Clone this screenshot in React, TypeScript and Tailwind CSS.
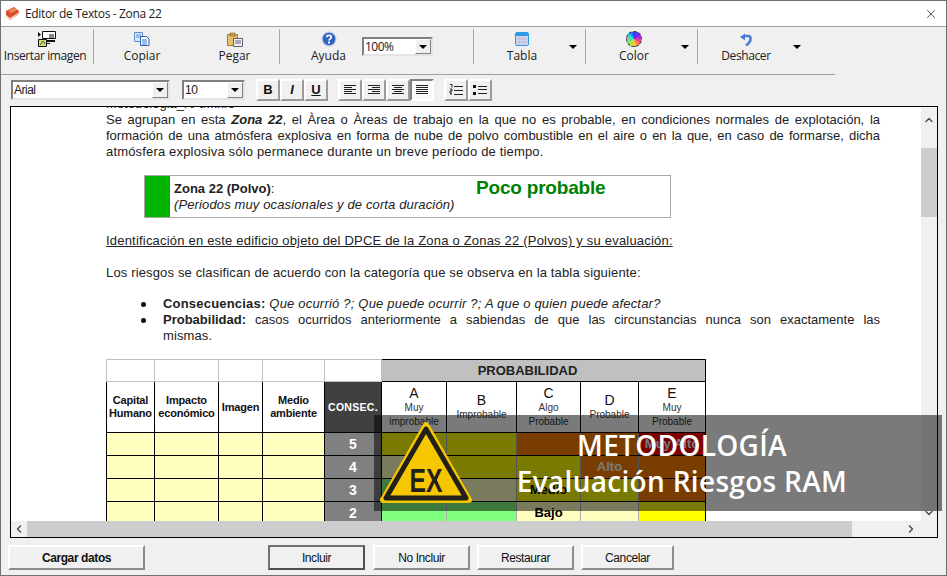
import React from 'react';
import { X, ChevronLeft, ChevronRight, ChevronUp, ChevronDown } from 'lucide-react';

const ui = 'font-["Open_Sans",sans-serif]';

const Caret = ({ className = '' }: { className?: string }) => (
  <svg width="8" height="4" viewBox="0 0 8 4" className={className}>
    <path d="M0 0h8L4 4z" fill="#000" />
  </svg>
);

const BookIcon = () => (
  <svg width="15" height="15" viewBox="0 0 15 15">
    <path d="M1 5 9 1l5 4-1 4-8 5-4-4z" fill="#d8502c" />
    <path d="M1 9l4 3 8-5v2l-8 5-4-3z" fill="#f2d8b8" />
    <path d="M3 5l6-3 3 2-6 3z" fill="#ee8a58" />
  </svg>
);

const InsertImageIcon = () => (
  <svg width="18" height="16" viewBox="0 0 18 16">
    <path d="M4.5.5h13v7h-13z" fill="#fff" stroke="#111" />
    <path d="M11 4h5M11 6h5" stroke="#111" />
    <path d="M0 1l3 2.5L0 6z" fill="#111" />
    <path d="M.5 8.5h8v7h-8z" fill="#d8d860" stroke="#111" />
    <path d="M2 14l3-4 2 3" fill="none" stroke="#277" />
    <path d="M9 9h8v2H9zM9 12h3v1H9z" fill="#111" />
  </svg>
);

const CopyIcon = () => (
  <svg width="16" height="14" viewBox="0 0 16 14">
    <path d="M.5.5h8v9h-8z" fill="#dce8fa" stroke="#5c8ed0" />
    <path d="M2 3h5M2 5h5" stroke="#5c8ed0" />
    <path d="M6.5 4.5h6l2.5 2.5v6.5H6.5z" fill="#f4f8ff" stroke="#2f62b0" />
    <path d="M8 8h5M8 10h5M8 12h5" stroke="#4a7cc8" />
  </svg>
);

const PasteIcon = () => (
  <svg width="16" height="15" viewBox="0 0 16 15">
    <path d="M.5 2.5h10v11H.5z" fill="#e6bf68" stroke="#a07c30" />
    <path d="M3 1h5v3H3z" fill="#c8a048" stroke="#7c6020" strokeWidth=".6" />
    <path d="M6.5 6.5h9v8h-9z" fill="#f2f2f6" stroke="#606070" />
    <path d="M8 9h6M8 11h6" stroke="#606078" />
  </svg>
);

const HelpIcon = () => (
  <svg width="16" height="16" viewBox="0 0 16 16">
    <circle cx="8" cy="8" r="7.5" fill="#b8c8e8" />
    <circle cx="8" cy="8" r="6.2" fill="#2f62c0" />
    <path d="M5.8 6.2C5.8 3.8 10.3 3.8 10.3 6.2c0 1.7-2.3 1.7-2.3 3.4" fill="none" stroke="#fff" strokeWidth="1.7" />
    <path d="M7 10.6h2v1.8H7z" fill="#fff" />
  </svg>
);

const TableIcon = () => (
  <svg width="14" height="14" viewBox="0 0 14 14">
    <rect x=".5" y=".5" width="13" height="13" rx="1.5" fill="#d6d6f0" stroke="#2b9be8" />
    <path d="M1 1h12v3H1z" fill="#2b9be8" />
    <path d="M4 4.5v9M7 4.5v9M10 4.5v9M1 7h12M1 10h12" stroke="#b0b0d8" strokeWidth=".6" />
  </svg>
);

const ColorIcon = () => (
  <div className="w-4 h-4 rounded-full border border-dashed border-[#333] bg-[conic-gradient(#2040ff,#a020f0,#ff5080,#ffd020,#70f070,#30e0d0,#2040ff)]" />
);

const UndoIcon = () => (
  <svg width="12" height="13" viewBox="0 0 12 13">
    <path d="M5 3h3.5C11 3 11 7 9.5 9 8.7 10.2 7.500 11.500 6 12.500" fill="none" stroke="#4a7cd8" strokeWidth="2.6" />
    <path d="M0 4 5 .5v7z" fill="#4a7cd8" />
  </svg>
);

const Sep = () => <div className="w-px h-[35px] -mt-[1px] bg-[#a8a8a8] shrink-0" />;

const ToolButton = ({ label, icon, className, labelClass = '' }: { label: string; icon: React.ReactNode; className: string; labelClass?: string }) => (
  <div className={`flex flex-col items-center shrink-0 ${className}`}>
    <div className="h-[18px] flex items-center justify-center">{icon}</div>
    <span className={`text-[12px] leading-[18px] -mt-[1px] text-[#202020] whitespace-nowrap ${labelClass}`}>{label}</span>
  </div>
);

const Combo = ({ value, className }: { value: string; className: string }) => (
  <div className={`flex items-center bg-white border-2 border-t-[#808080] border-l-[#808080] border-r-[#e4e4e4] border-b-[#e4e4e4] shrink-0 ${className}`}>
    <span className="flex-1 pl-[1px] text-[12px] tracking-[-0.5px] text-[#202020]">{value}</span>
    <div className="w-4 h-full bg-[#f0f0f0] border border-t-white border-l-white border-r-[#808080] border-b-[#808080] flex items-center justify-center">
      <Caret />
    </div>
  </div>
);

const FmtButton = ({ children, pressed = false }: { children: React.ReactNode; pressed?: boolean }) => (
  <div
    className={`w-[24px] h-[22px] flex items-center justify-center shrink-0 border-2 ${
      pressed
        ? 'border-t-[#808080] border-l-[#808080] border-r-white border-b-white bg-[#fafafa]'
        : 'border-t-white border-l-white border-r-[#9a9a9a] border-b-[#9a9a9a] bg-[#f0f0f0]'
    }`}
  >
    {children}
  </div>
);

const Lines = ({ d }: { d: string }) => (
  <svg width="14" height="12" viewBox="0 0 14 12">
    <path d={d} stroke="#222" fill="none" />
  </svg>
);

const Btn = ({ label, className, bold = false, isDefault = false }: { label: string; className: string; bold?: boolean; isDefault?: boolean }) => (
  <div
    className={`h-[25px] flex items-center justify-center shrink-0 bg-[#f0f0f0] text-[12px] tracking-[-0.4px] border-2 ${
      isDefault ? 'border-t-[#707070] border-l-[#707070] border-r-[#505050] border-b-[#505050]' : 'border-t-white border-l-white border-r-[#8c8c8c] border-b-[#8c8c8c]'
    } ${bold ? 'font-bold' : ''} ${className}`}
  >
    {label}
  </div>
);

// a line of running text stretched to the full column, as the editor wraps it
const FullLine = ({ children }: { children: React.ReactNode }) => (
  <div className="text-justify [text-align-last:justify] whitespace-nowrap">{children}</div>
);

const Bullet = () => <span className="w-[5px] h-[5px] rounded-full bg-[#111] mt-[6px] ml-[35px] mr-[17px] shrink-0" />;

type Fill = 'y' | 'c' | 'o' | 'r' | 'g';
const fills: Record<Fill, string> = {
  y: 'bg-[#ffff00]',
  c: 'bg-[#ffffc0]',
  o: 'bg-[#ff8000]',
  r: 'bg-[#ff0000]',
  g: 'bg-[#80ff80]',
};

const matrix: { n: number; cells: Fill[]; text: Record<number, [string, string]> }[] = [
  { n: 5, cells: ['y', 'y', 'o', 'o', 'r'], text: { 4: ['Muy Alto', 'text-white'] } },
  { n: 4, cells: ['c', 'y', 'y', 'o', 'o'], text: { 3: ['Alto', 'text-white'] } },
  { n: 3, cells: ['g', 'c', 'y', 'y', 'o'], text: { 2: ['Medio', 'text-black'] } },
  { n: 2, cells: ['g', 'g', 'c', 'c', 'y'], text: { 2: ['Bajo', 'text-black'] } },
];

const probHeaders = [
  { l: 'A', sub: ['Muy', 'improbable'] },
  { l: 'B', sub: ['Improbable'] },
  { l: 'C', sub: ['Algo', 'Probable'] },
  { l: 'D', sub: ['Probable'] },
  { l: 'E', sub: ['Muy', 'Probable'] },
];

const RiskTable = () => (
  <table className="table-fixed border-collapse w-[599px] mt-[15px] font-['Liberation_Sans',sans-serif] text-[#111]">
    <colgroup>
      {[48, 64, 44, 62, 57, 65, 70, 64, 58, 67].map((w, i) => (
        <col key={i} style={{ width: w }} />
      ))}
    </colgroup>
    <tbody>
      <tr className="h-[22px]">
        {[0, 1, 2, 3, 4].map((i) => (
          <td key={i} className="border border-[#c0c0c0]" />
        ))}
        <td colSpan={5} className="border border-black bg-[#c0c0c0] text-center font-bold text-[13px] pr-[32px] text-[#222]">
          PROBABILIDAD
        </td>
      </tr>
      <tr className="h-[51px] text-center">
        {[['Capital', 'Humano'], ['Impacto', 'económico'], ['Imagen'], ['Medio', 'ambiente']].map((t, i) => (
          <td key={i} className="border border-black font-bold text-[11px] leading-[13px] tracking-[-0.2px]">
            {t.map((s) => (
              <div key={s}>{s}</div>
            ))}
          </td>
        ))}
        <td className="border border-black bg-[#404040] text-white font-bold text-[10.5px] tracking-[0.3px]">CONSEC.</td>
        {probHeaders.map((h) => (
          <td key={h.l} className="border border-black">
            <div className="text-[14px] leading-[15px] font-medium">{h.l}</div>
            {h.sub.map((s) => (
              <div key={s} className="text-[10px] leading-[14px] text-[#333]">
                {s}
              </div>
            ))}
          </td>
        ))}
      </tr>
      {matrix.map((row) => (
        <tr key={row.n} className="h-[23px] text-center">
          {[0, 1, 2, 3].map((i) => (
            <td key={i} className="border border-black bg-[#ffffc0]" />
          ))}
          <td className="border border-black bg-[#808080] text-white font-bold text-[14px]">{row.n}</td>
          {row.cells.map((c, i) => (
            <td
              key={i}
              className={`border border-y-black font-bold text-[13px] ${i === 4 ? 'border-r-black' : 'border-r-[#b0b0b0]'} border-l-[#b0b0b0] ${fills[c]} ${row.text[i] ? row.text[i][1] : ''}`}
            >
              {row.text[i] ? row.text[i][0] : ''}
            </td>
          ))}
        </tr>
      ))}
    </tbody>
  </table>
);

export default function App() {
  return (
    <div className={`relative w-[947px] h-[576px] overflow-hidden flex flex-col bg-[#f0f0f0] border border-[#707070] text-[#111] ${ui}`}>
      {/* title bar */}
      <div className="h-[26px] shrink-0 bg-white border-b border-[#a0a0a0] flex items-center pl-[4px] pr-[8px]">
        <BookIcon />
        <span className="ml-[5px] text-[12px] tracking-[-0.35px] text-[#222]">Editor de Textos - Zona 22</span>
        <X className="ml-auto w-[14px] h-[14px] text-[#222]" strokeWidth={1.3} />
      </div>

      {/* main toolbar */}
      <div className="h-[48px] shrink-0 w-[834px] border-b border-[#a0a0a0] flex items-start pt-[3px]">
        <ToolButton className="w-[92px]" labelClass="tracking-[-0.4px] -translate-x-[2px]" label="Insertar imagen" icon={<InsertImageIcon />} />
        <Sep />
        <ToolButton className="w-[96px]" label="Copiar" icon={<CopyIcon />} />
        <ToolButton className="w-[89px]" label="Pegar" icon={<PasteIcon />} />
        <Sep />
        <ToolButton className="w-[82px] pl-[15px]" label="Ayuda" icon={<HelpIcon />} />
        <Combo value="100%" className="w-[71px] h-[19px] mt-[7px]" />
        <div className="w-[40px] shrink-0" />
        <Sep />
        <ToolButton className="w-[96px]" label="Tabla" icon={<TableIcon />} />
        <div className="w-[16px] shrink-0 pt-[15px] -ml-[1px]">
          <Caret />
        </div>
        <Sep />
        <ToolButton className="w-[96px]" label="Color" icon={<ColorIcon />} />
        <div className="w-[16px] shrink-0 pt-[15px] -ml-[1px]">
          <Caret />
        </div>
        <Sep />
        <ToolButton className="w-[96px]" labelClass="tracking-[-0.4px]" label="Deshacer" icon={<UndoIcon />} />
        <div className="w-[16px] shrink-0 pt-[15px] -ml-[1px]">
          <Caret />
        </div>
      </div>

      {/* format toolbar */}
      <div className="h-[31px] shrink-0 flex items-center pl-[10px] pb-[2px] font-['Liberation_Sans',sans-serif]">
        <Combo value="Arial" className="w-[159px] h-[20px]" />
        <Combo value="10" className="w-[63px] h-[20px] ml-[12px]" />
        <div className="flex ml-[11px]">
          <FmtButton><span className="font-bold text-[13px]">B</span></FmtButton>
          <FmtButton><span className="font-bold italic text-[13px]">I</span></FmtButton>
          <FmtButton><span className="font-bold underline text-[13px]">U</span></FmtButton>
        </div>
        <div className="flex ml-[10px]">
          <FmtButton><Lines d="M1 1.500h12M1 3.500h8M1 5.500h12M1 7.500h8M1 9.500h12" /></FmtButton>
          <FmtButton><Lines d="M1 1.500h12M5 3.500h8M1 5.500h12M5 7.500h8M1 9.500h12" /></FmtButton>
          <FmtButton><Lines d="M1 1.500h12M3 3.500h8M1 5.500h12M3 7.500h8M1 9.500h12" /></FmtButton>
          <FmtButton pressed><Lines d="M1 1.500h12M1 3.500h12M1 5.500h12M1 7.500h12M1 9.500h12" /></FmtButton>
        </div>
        <div className="flex ml-[10px]">
          <FmtButton><Lines d="M1 .5h2v3M5 2.500h9M1 5h2v2H1v2h2M5 6.500h9M1 10h2M5 10.500h9" /></FmtButton>
          <FmtButton>
            <svg width="14" height="12" viewBox="0 0 14 12">
              <path d="M0 1h3v3H0zM0 8h3v3H0z" fill="#111" />
              <path d="M5 2.500h9M5 5.500h9M5 9.500h9" stroke="#222" />
            </svg>
          </FmtButton>
        </div>
      </div>

      {/* editor */}
      <div className="ml-[9px] w-[928px] h-[432px] shrink-0 flex flex-col border border-black bg-white">
        <div className="flex-1 flex min-h-0">
          <div className="flex-1 min-w-0 overflow-hidden pl-[95px] font-['Liberation_Sans',sans-serif] text-[13px] leading-[16px] text-[#222]">
            <div className="-mt-[11px] w-[774px]">
              <div>Metodologia_r0 tM.xfo</div>
              <FullLine>
                Se agrupan en esta <b><i>Zona 22</i></b>, el Àrea o Àreas de trabajo en la que no es probable, en condiciones normales de explotación, la
              </FullLine>
              <FullLine>
                formación de una atmósfera explosiva en forma de nube de polvo combustible en el aire o en la que, en caso de formarse, dicha
              </FullLine>
              <div className="tracking-[0.17px]">atmósfera explosiva sólo permanece durante un breve período de tiempo.</div>
              <div className="ml-[38px] mt-[15px] w-[527px] h-[43px] border border-[#a8a8a8] flex">
                <div className="w-[25px] bg-[#00b400]" />
                <div className="pl-[4px] pt-[5px] flex-1">
                  <div><b>Zona 22 (Polvo)</b>:</div>
                  <div className="tracking-[0.13px]"><i>(Periodos muy ocasionales y de corta duración)</i></div>
                </div>
                <span className="w-[194px] pt-[1px] text-[19px] leading-[22px] font-bold text-[#008000] tracking-[-0.2px] shrink-0">Poco probable</span>
              </div>
              <div className="mt-[15px] underline tracking-[0.2px]">Identificación en este edificio objeto del DPCE de la Zona o Zonas 22 (Polvos) y su evaluación:</div>
              <div className="mt-[16px] tracking-[0.15px]">Los riesgos se clasifican de acuerdo con la categoría que se observa en la tabla siguiente:</div>
              <div className="mt-[15px]">
                <div className="flex">
                  <Bullet />
                  <div className="tracking-[0.2px]"><b>Consecuencias:</b> <i>Que ocurrió ?; Que puede ocurrir ?; A que o quien puede afectar?</i></div>
                </div>
                <div className="flex">
                  <Bullet />
                  <div className="flex-1 min-w-0">
                    <FullLine><b>Probabilidad:</b> casos ocurridos anteriormente a sabiendas de que las circunstancias nunca son exactamente las</FullLine>
                    <div className="tracking-[0.1px]">mismas.</div>
                  </div>
                </div>
              </div>
              <RiskTable />
            </div>
          </div>
          <div className="w-[16px] shrink-0 bg-[#f0f0f0] flex flex-col items-center">
            <ChevronUp className="w-[12px] h-[12px] mt-[7px] text-[#505050]" strokeWidth={3} />
            <div className="w-full h-[69px] bg-[#cdcdcd] mt-[22px]" />
            <ChevronDown className="w-[12px] h-[12px] mt-auto mb-[2px] text-[#505050]" strokeWidth={3} />
          </div>
        </div>
        <div className="h-[16px] shrink-0 bg-[#f0f0f0] flex items-center">
          <ChevronLeft className="w-[12px] h-[12px] ml-[2px] text-[#505050]" strokeWidth={3} />
          <div className="w-[825px] h-full bg-[#cdcdcd] ml-[2px]" />
          <ChevronRight className="w-[12px] h-[12px] ml-auto mr-[20px] text-[#505050]" strokeWidth={3} />
        </div>
      </div>

      {/* bottom buttons */}
      <div className="flex items-start pl-[7px] pt-[7px] font-['Liberation_Sans',sans-serif]">
        <Btn label="Cargar datos" bold className="w-[137px]" />
        <Btn label="Incluir" isDefault className="w-[97px] ml-[123px]" />
        <Btn label="No Incluir" className="w-[97px] ml-[8px]" />
        <Btn label="Restaurar" className="w-[97px] ml-[7px]" />
        <Btn label="Cancelar" className="w-[93px] ml-[7px]" />
      </div>

      {/* banner on top of the screenshot */}
      <div className="absolute left-[373px] top-[414px] w-[568px] h-[96px] bg-black/52 flex flex-col items-center justify-center pl-[48px] text-white font-semibold">
        <div className="text-[28px] leading-[35px] tracking-[0.3px]">METODOLOGÍA</div>
        <div className="text-[28px] leading-[36px] tracking-[0.3px]">Evaluación Riesgos RAM</div>
      </div>
      <svg width="94" height="84" viewBox="0 0 94 84" className="absolute left-[378px] top-[420px]">
        <path d="M47 4 90 79H4z" fill="#f6c700" stroke="#f6c700" strokeWidth="6" strokeLinejoin="round" />
        <path d="M47 8 87 77H7z" fill="none" stroke="#231f1a" strokeWidth="5" strokeLinejoin="round" />
        <text x="47" y="71" textAnchor="middle" fontFamily="Liberation Sans" fontWeight="700" fontSize="34" fill="#231f1a" textLength="33" lengthAdjust="spacingAndGlyphs">EX</text>
      </svg>
    </div>
  );
}
